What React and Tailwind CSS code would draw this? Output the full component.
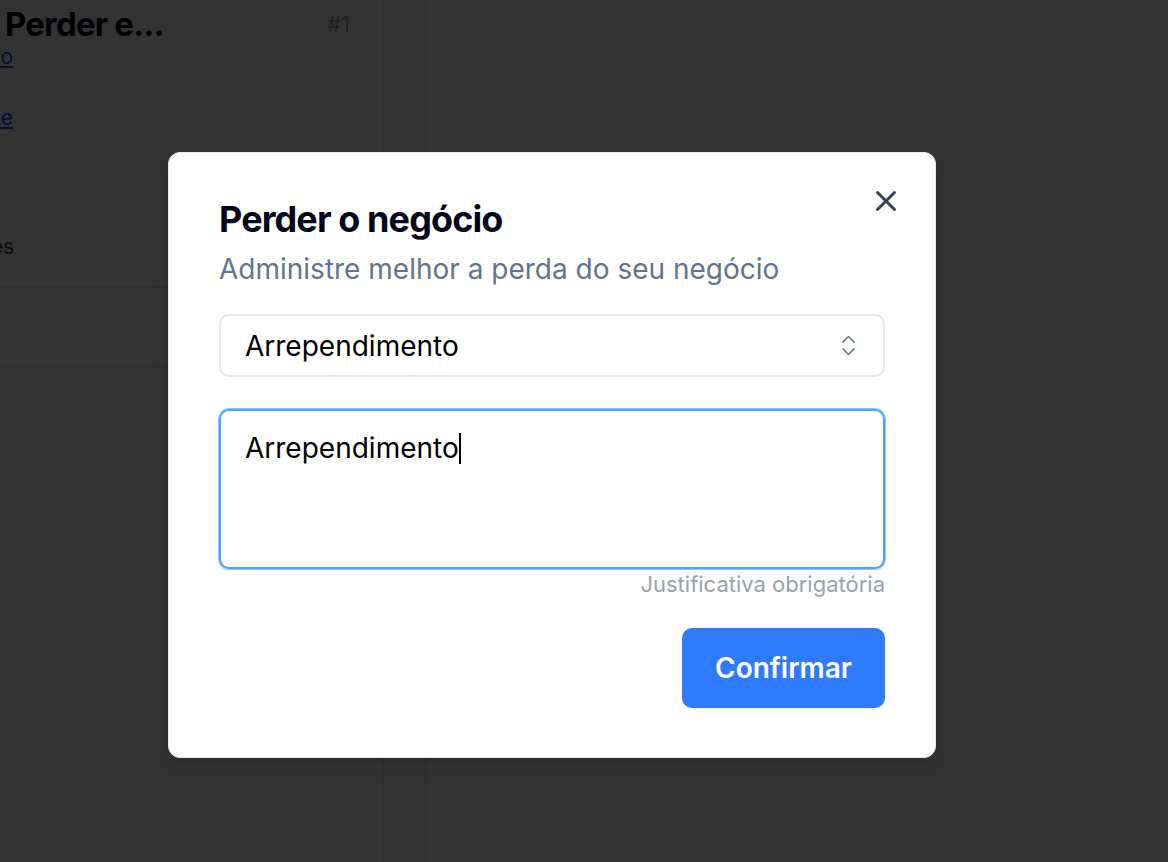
import { X, ChevronsUpDown } from "lucide-react";

function Background() {
    return (
        <div className="flex h-[862px] w-full bg-white">
            {/* left detail panel */}
            <aside className="w-[384px] flex-shrink-0 border-r border-gray-200 flex flex-col overflow-hidden">
                <div className="flex items-start justify-between pl-[5px] pr-[33px] pt-[2px]">
                    <h2 className="text-[33px] font-bold leading-[44px] text-gray-950 tracking-tight">Perder e...</h2>
                    <span className="text-[22px] leading-[44px] text-gray-400">#1</span>
                </div>
                <div className="w-[13px] overflow-hidden flex justify-end mt-[-4px]">
                    <a className="whitespace-nowrap text-[21px] leading-[30px] text-blue-700 underline">Ver negócio</a>
                </div>
                <div className="w-[13px] overflow-hidden flex justify-end mt-[31px]">
                    <a className="whitespace-nowrap text-[21px] leading-[30px] text-blue-700 underline">Ver cliente</a>
                </div>
                <div className="w-[14px] overflow-hidden flex justify-end mt-[99px]">
                    <span className="whitespace-nowrap text-[21px] leading-[30px] text-gray-700">Observações</span>
                </div>
                <div className="mt-[25px] h-[80px] border-t border-b border-gray-200" />
            </aside>
            <div className="w-[42px] flex-shrink-0 border-r border-gray-200" />
            <main className="flex-1" />
        </div>
    );
}

export default function App() {
    return (
        <div className="relative h-[862px] w-full overflow-hidden" style={{ fontFamily: "Inter, 'Noto Sans', sans-serif" }}>
            <Background />

            {/* overlay */}
            <div className="absolute inset-0 bg-black/80" />

            {/* dialog */}
            <div className="absolute left-[168px] top-[152px] w-[768px] rounded-[12px] border border-slate-200 bg-white px-[50px] pt-[46px] pb-[49px] shadow-lg">
                <button className="absolute right-[32px] top-[31px] text-gray-700">
                    <X className="h-[34px] w-[34px]" strokeWidth={2.1} />
                </button>

                <h2 className="text-[36px] font-bold leading-[40px] tracking-tight text-slate-950">Perder o negócio</h2>
                <p className="mt-[14px] text-[28px] leading-[32px] text-slate-500">Administre melhor a perda do seu negócio</p>

                <div className="mt-[29px] flex h-[63px] items-center justify-between rounded-[10px] border-2 border-slate-200 pl-[24px] pr-[21px]">
                    <span className="text-[28px] text-black">Arrependimento</span>
                    <ChevronsUpDown className="h-[27px] w-[27px] text-slate-500" strokeWidth={1.3} />
                </div>

                <div className="mt-[32px] h-[160px] rounded-[10px] border-2 border-blue-400 ring-1 ring-blue-300 px-[24px] pt-[16px]">
                    <span className="text-[28px] leading-[36px] text-black">Arrependimento</span>
                    <span className="inline-block h-[31px] w-[2px] translate-y-[6px] bg-black" />
                </div>

                <p className="mt-[1px] text-right text-[22px] leading-[28px] text-gray-400">Justificativa obrigatória</p>

                <div className="mt-[30px] flex justify-end">
                    <button className="h-[80px] w-[203px] rounded-[10px] bg-[#2f7bff] text-[28px] font-semibold text-white">Confirmar</button>
                </div>
            </div>
        </div>
    );
}
